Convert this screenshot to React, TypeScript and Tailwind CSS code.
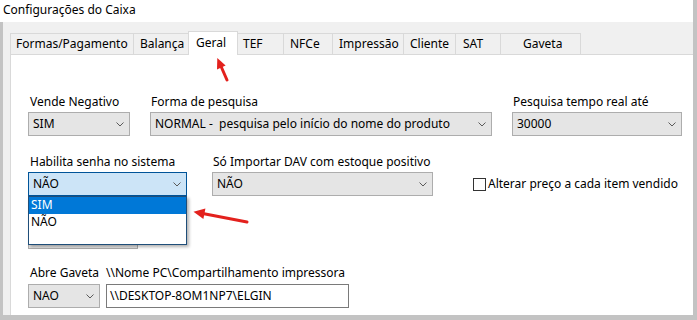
import React from "react";

// ── Small pieces ──────────────────────────────────────────────────────────────

function Chevron() {
  return (
    <svg width="8" height="5" viewBox="0 0 8 5" fill="none" stroke="#5a5a5a" strokeWidth="1">
      <path d="M0.5 0.5 L4 4 L7.5 0.5" />
    </svg>
  );
}

function Combo({
  value,
  width,
  focused = false,
}: {
  value: string;
  width: string;
  focused?: boolean;
}) {
  return (
    <div
      className={[
        "h-[24px] flex items-center justify-between pl-[4px] pr-[5px] border",
        width,
        focused ? "bg-[#cce4f7] border-[#005499]" : "bg-[#e5e5e5] border-[#adadad]",
      ].join(" ")}
    >
      <span className="whitespace-pre leading-4">{value}</span>
      <Chevron />
    </div>
  );
}

type Tab = { label: string; width: string; pad: string; selected?: boolean; noLeft?: boolean; last?: boolean };

const TABS: Tab[] = [
  { label: "Formas/Pagamento", width: "w-[123px]", pad: "pl-[5px]" },
  { label: "Balança", width: "w-[55px]", pad: "pl-[6px]" },
  { label: "Geral", width: "w-[50px]", pad: "pl-[7px]", selected: true },
  { label: "TEF", width: "w-[45px]", pad: "pl-[5px]", noLeft: true },
  { label: "NFCe", width: "w-[49px]", pad: "pl-[6px]" },
  { label: "Impressão", width: "w-[71px]", pad: "pl-[6px]" },
  { label: "Cliente", width: "w-[52px]", pad: "pl-[6px]" },
  { label: "SAT", width: "w-[45px]", pad: "pl-[7px]" },
  { label: "Gaveta", width: "w-[81px]", pad: "pl-[22px]", last: true },
];

// ── Page ───────────────────────────────────────────────────────────────────────

export default function App() {
  return (
    <div className="relative w-[697px] h-[320px] bg-white flex flex-col border-r-4 border-[#c3c3c3] overflow-hidden font-['Noto_Sans',sans-serif] text-[12px] text-black">
      {/* Window title */}
      <div className="h-[22px] shrink-0 pl-[3px] pt-[2px] leading-4">Configurações do Caixa</div>

      {/* Tab control */}
      <div className="flex-1 flex flex-col border-l-[3px] border-b-[5px] border-[#c3c3c3] bg-[#f0f0f0] pl-[7px] pt-[9px]">
        <div className="h-[23px] flex items-end shrink-0">
          {TABS.map((t) =>
            t.selected ? (
              <div
                key={t.label}
                className={`relative z-10 h-[24px] -mb-px bg-white border border-b-0 border-[#d9d9d9] ${t.width} ${t.pad} pt-[3px] leading-4`}
              >
                {t.label}
              </div>
            ) : (
              <div
                key={t.label}
                className={[
                  "h-[21px] border-t border-[#d9d9d9] pt-[2px] leading-4 whitespace-nowrap",
                  t.noLeft ? "" : "border-l",
                  t.last ? "border-r" : "",
                  t.width,
                  t.pad,
                ].join(" ")}
              >
                {t.label}
              </div>
            )
          )}
        </div>

        {/* Panel "Geral" */}
        <div className="flex-1 bg-white border-t border-l border-[#d9d9d9] pl-[17px] flex flex-col">
          {/* Row 1 */}
          <div className="flex items-start mt-[39px]">
            <div className="flex flex-col">
              <span className="pl-[2px] leading-4">Vende Negativo</span>
              <div className="mt-[2px]">
                <Combo value="SIM" width="w-[102px]" />
              </div>
            </div>
            <div className="flex flex-col ml-[20px]">
              <span className="pl-px leading-4">Forma de pesquisa</span>
              <div className="mt-[2px]">
                <Combo value="NORMAL -  pesquisa pelo início do nome do produto" width="w-[342px]" />
              </div>
            </div>
            <div className="flex flex-col ml-[20px]">
              <span className="pl-px leading-4">Pesquisa tempo real até</span>
              <div className="mt-[2px]">
                <Combo value="30000" width="w-[170px]" />
              </div>
            </div>
          </div>

          {/* Row 2 */}
          <div className="flex items-end mt-[18px]">
            <div className="relative flex flex-col">
              <span className="pl-[2px] leading-4">Habilita senha no sistema</span>
              <div className="mt-[2px]">
                <Combo value="NÃO" width="w-[159px]" focused />
              </div>
              {/* Open drop-down list */}
              <div className="absolute left-0 top-full z-20 w-[159px] h-[49px] bg-white border border-[#1f4e79] shadow-[2px_2px_3px_rgba(0,0,0,0.3)] flex flex-col">
                <div className="h-[17px] bg-[#0078d7] text-white pl-[2px] leading-4">SIM</div>
                <div className="h-[17px] pl-[2px] leading-4">NÃO</div>
              </div>
            </div>
            <div className="flex flex-col ml-[25px]">
              <span className="pl-px leading-4">Só Importar DAV com estoque positivo</span>
              <div className="mt-[2px]">
                <Combo value="NÃO" width="w-[221px]" />
              </div>
            </div>
            <label className="flex items-center ml-[40px] h-[24px]">
              <span className="w-[13px] h-[13px] border border-[#333333] bg-white" />
              <span className="ml-[2px] leading-4">Alterar preço a cada item vendido</span>
            </label>
          </div>

          {/* Control hidden under the list */}
          <div className="mt-[29px] w-[110px] h-[24px] bg-[#e5e5e5] border border-[#adadad]" />

          {/* Row 3 */}
          <div className="flex items-end mt-[16px]">
            <div className="flex flex-col">
              <span className="pl-[2px] leading-4">Abre Gaveta</span>
              <div className="mt-[3px]">
                <Combo value="NAO" width="w-[72px]" />
              </div>
            </div>
            <div className="flex flex-col ml-[6px]">
              <span className="leading-4">{"\\\\Nome PC\\Compartilhamento impressora"}</span>
              <div className="mt-[3px] w-[243px] h-[24px] border border-[#7a7a7a] bg-white pl-[3px] flex items-center">
                <span className="leading-4">{"\\\\DESKTOP-8OM1NP7\\ELGIN"}</span>
              </div>
            </div>
          </div>
        </div>
      </div>

      {/* Red annotation arrows */}
      <svg className="absolute left-0 top-0 pointer-events-none z-30" width="697" height="320">
        <line x1="227" y1="80" x2="221.3" y2="67" stroke="#e3211d" strokeWidth="3" strokeLinecap="round" />
        <polygon points="217.3,58 225.6,65.6 217,69.4" fill="#e3211d" />
        <line x1="247" y1="222" x2="204" y2="213.8" stroke="#e3211d" strokeWidth="3" strokeLinecap="round" />
        <polygon points="193.5,211.7 205.4,208.6 203.4,219" fill="#e3211d" />
      </svg>
    </div>
  );
}
